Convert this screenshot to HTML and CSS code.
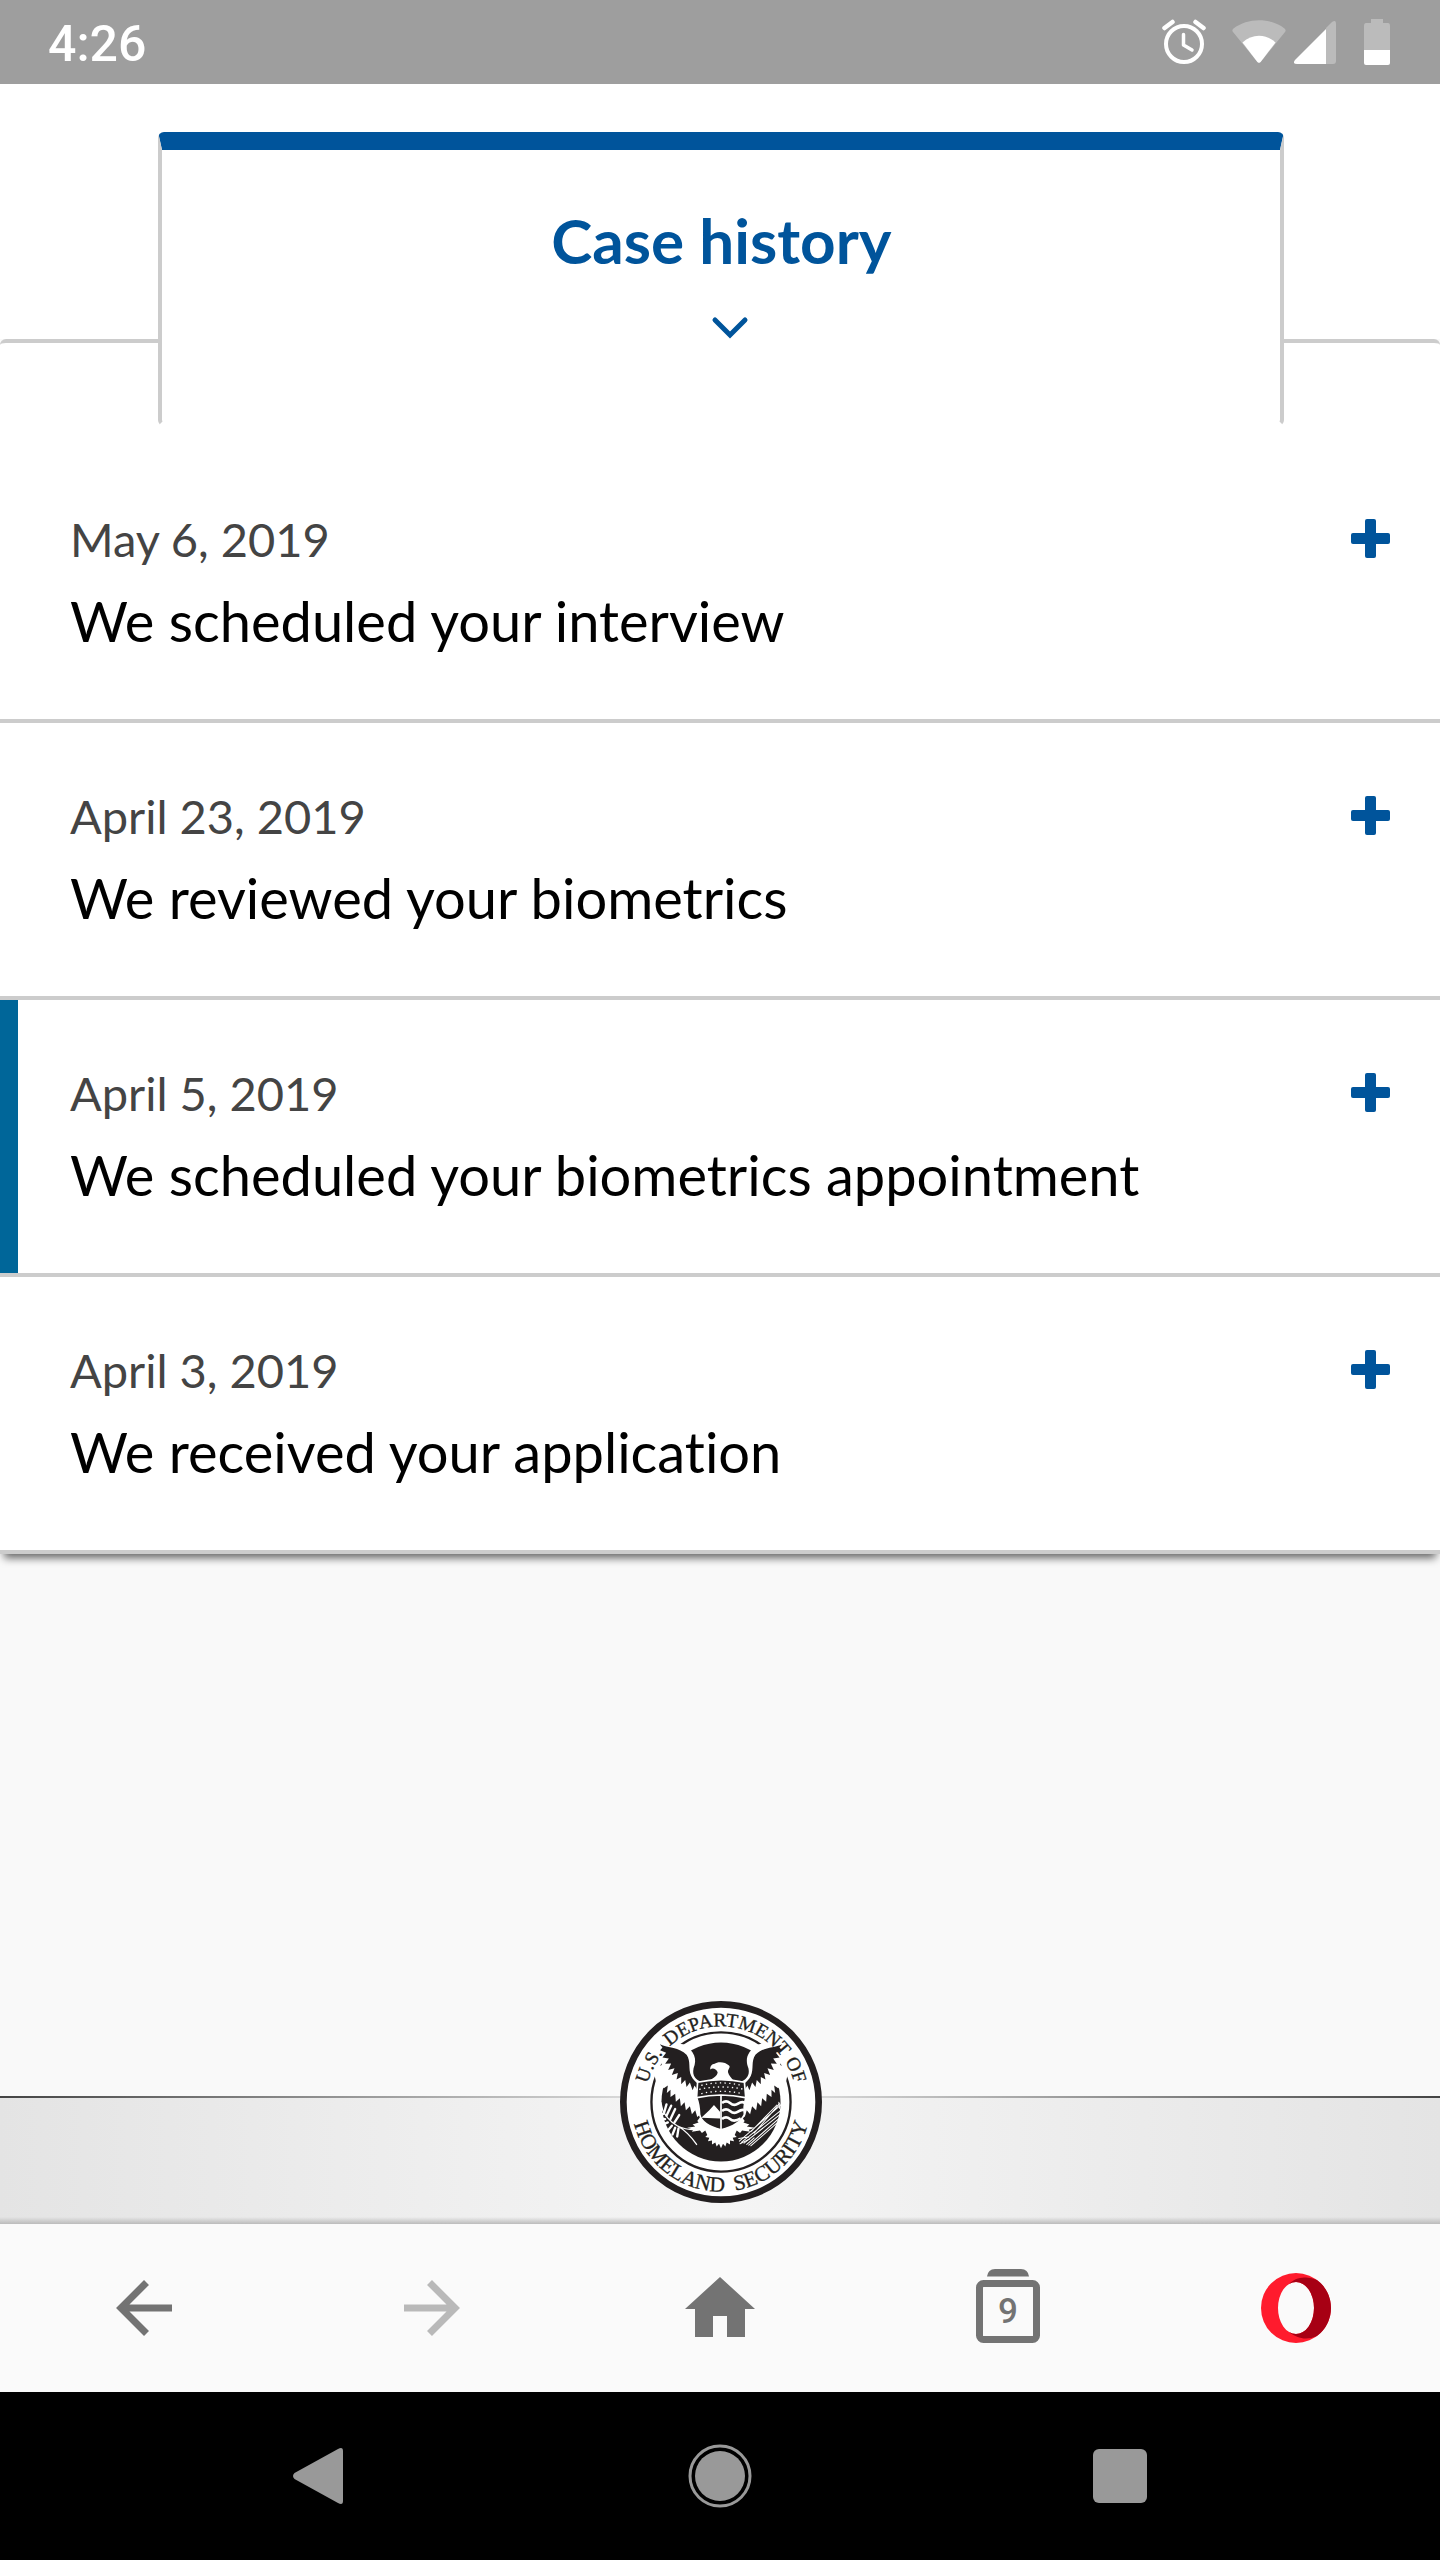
FILE: index.html
```html
<!DOCTYPE html>
<html lang="en">
<head>
  <meta charset="UTF-8" />
  <meta name="viewport" content="width=device-width, initial-scale=1.0" />
  <title>Case history</title>
  <link rel="stylesheet" href="styles.css">
</head>
<body>
  <header class="status-bar">
    <span class="clock">4:26</span>
    <div class="status-icons">
      <svg class="icon-alarm" width="44" height="46" viewBox="0 0 44 46" fill="none" stroke="#fff" stroke-linecap="round" stroke-linejoin="round">
        <circle cx="22" cy="25" r="18" stroke-width="4" />
        <path d="M21.500 15.500V26L30 31" stroke-width="3.500" />
        <path d="M2.500 9L10.500 3M33.500 3L41.500 9" stroke-width="4.500" />
      </svg>
      <svg class="icon-wifi" width="54" height="46" viewBox="0 0 54 46">
        <path d="M1.500 9.500C16 -1.500 38 -1.500 52.500 9.500Q54.500 11 53 13L29 42.500Q27 45 25 42.500L1 13Q-.5 11 1.500 9.500Z" fill="#bbb" />
        <path d="M10.500 23.500C20 14.500 34 14.500 43.500 23.500L29 42.500Q27 45 25 42.500Z" fill="#fff" />
      </svg>
      <svg class="icon-signal" width="42" height="46" viewBox="0 0 42 46">
        <path d="M32 9L38 3Q42 0 42 5V42Q42 45 39 45H32Z" fill="#bbb" />
        <path d="M32 10V45H3Q-2 45 1 41Z" fill="#fff" />
      </svg>
      <svg class="icon-battery" width="26" height="46" viewBox="0 0 26 46">
        <path d="M7 0H19V4H24Q26 4 26 7V31H0V7Q0 4 2 4H7Z" fill="#bbb" />
        <path d="M0 31H26V44Q26 46 24 46H2Q0 46 0 44Z" fill="#fff" />
      </svg>
    </div>
  </header>

  <main>
    <section class="panel">
      <button class="tab" type="button">
        Case history
        <svg class="chevron" width="38" height="24" viewBox="0 0 38 24" fill="none" stroke="#00549b" stroke-width="5" stroke-linecap="round">
          <path d="M4 4L19 19L34 4" />
        </svg>
      </button>

      <ul class="history">
        <li class="event">
          <div>
            <p class="date">May 6, 2019</p>
            <p class="title">We scheduled your interview</p>
          </div>
          <button class="expand" type="button" aria-label="Expand">
            <svg width="39" height="39" viewBox="0 0 39 39" fill="#00549b"><rect x="14" width="11" height="39" rx="2" /><rect y="14" width="39" height="11" rx="2" /></svg>
          </button>
        </li>
        <li class="event">
          <div>
            <p class="date">April 23, 2019</p>
            <p class="title">We reviewed your biometrics</p>
          </div>
          <button class="expand" type="button" aria-label="Expand">
            <svg width="39" height="39" viewBox="0 0 39 39" fill="#00549b"><rect x="14" width="11" height="39" rx="2" /><rect y="14" width="39" height="11" rx="2" /></svg>
          </button>
        </li>
        <li class="event active">
          <div>
            <p class="date">April 5, 2019</p>
            <p class="title">We scheduled your biometrics appointment</p>
          </div>
          <button class="expand" type="button" aria-label="Expand">
            <svg width="39" height="39" viewBox="0 0 39 39" fill="#00549b"><rect x="14" width="11" height="39" rx="2" /><rect y="14" width="39" height="11" rx="2" /></svg>
          </button>
        </li>
        <li class="event">
          <div>
            <p class="date">April 3, 2019</p>
            <p class="title">We received your application</p>
          </div>
          <button class="expand" type="button" aria-label="Expand">
            <svg width="39" height="39" viewBox="0 0 39 39" fill="#00549b"><rect x="14" width="11" height="39" rx="2" /><rect y="14" width="39" height="11" rx="2" /></svg>
          </button>
        </li>
      </ul>
    </section>
  </main>

  <footer class="site-footer">
    <svg class="seal" viewBox="61 61 604 604" role="img" aria-label="U.S. Department of Homeland Security">
      <defs>
        <path id="arcTop" d="M137 363A226 226 0 0 1 589 363" />
        <path id="arcBottom" d="M95 363A268 268 0 0 0 631 363" />
        <g id="wing">
          <path fill="#fff" d="M165 180L250 190C285 210 292 235 281 262C276 285 288 295 302 302V400L292 408L286 388L276 400L270 376L258 388L254 364L243 376L240 352L228 362L226 338L212 348L212 326L201 336L204 314L192 322L168 300L160 262L186 252Z" />
          <path d="M180 190C205 202 238 198 260 222C274 242 264 264 274 285C279 297 288 302 293 308V328L284 314L278 328L270 305L260 318L256 297L244 310L244 288L230 296L234 276L216 282L224 262L205 267L214 248L196 249L207 233L188 230L199 216L181 208L188 200Z" />
        </g>
      </defs>
      <g fill="#231f20">
        <circle cx="363" cy="363" r="292" fill="#fff" stroke="#231f20" stroke-width="20" />
        <circle cx="363" cy="363" r="208" fill="none" stroke="#231f20" stroke-width="7" />
        <circle cx="363" cy="363" r="178" />
        <use href="#wing" />
        <use href="#wing" transform="translate(726 0) scale(-1 1)" />
        <text class="seal-text" font-size="58"><textPath href="#arcTop" startOffset="50%" text-anchor="middle">U.S.&ensp;DEPARTMENT OF</textPath></text>
        <text class="seal-text" font-size="64"><textPath href="#arcBottom" startOffset="50%" text-anchor="middle">HOMELAND&ensp;SECURITY</textPath></text>
      </g>
      <!-- head, legs and tail -->
      <g fill="#fff">
        <path d="M331 266C330 256 336 250 344 249C352 241 376 242 387 254C393 260 383 264 384 274C386 284 394 290 400 299H326C342 292 352 284 353 274C348 264 338 260 331 266Z" />
        <path d="M303 405L292 420L296 424L278 430L286 436L262 440L280 446L276 452L300 448L306 456L316 448L322 462L316 468L328 470L324 480L336 478L336 490L346 484L350 496L357 488L363 501L369 488L376 496L380 484L390 490L390 478L402 480L398 470L410 468L404 462L410 448L420 456L426 448L450 452L446 446L464 440L440 436L448 430L430 424L434 420L423 405Z" />
      </g>
      <!-- shield -->
      <path d="M293 304Q363 288 433 304L437 350Q430 378 433 400Q420 432 363 446Q306 432 299 400Q298 370 290 350Z" fill="#231f20" stroke="#fff" stroke-width="5" />
      <path d="M291 350Q363 334 436 350M363 343V444" fill="none" stroke="#fff" stroke-width="5" />
      <g fill="none" stroke="#fff" stroke-width="4" stroke-dasharray="4 10">
        <path d="M304 313Q363 299 424 313" />
        <path d="M298 325Q363 311 432 325" />
        <path d="M304 338Q363 324 428 338" />
      </g>
      <path d="M304 410L328 388L342 372L360 392V412Z" fill="#fff" />
      <path d="M366 366Q378 356 390 366T414 368T434 366M366 390Q378 380 390 390T414 392T432 388M366 414Q378 404 390 414T422 412" fill="none" stroke="#fff" stroke-width="8" />
      <!-- olive branch -->
      <g stroke="#fff" fill="none" stroke-width="4" stroke-linecap="round">
        <path d="M184 378Q200 416 232 434T290 490M232 434Q256 446 284 446" />
        <path stroke-width="7" d="M186 384L182 366M192 398L200 370M200 404L214 374M212 414L226 384M224 424L238 402M188 400L178 394M196 414L182 412M204 424L190 430M216 434L204 448M226 440L218 460M236 442L232 466" />
      </g>
      <!-- arrows -->
      <g stroke="#fff" fill="none" stroke-width="3" stroke-linecap="round">
        <path d="M418 480L548 366M424 484L554 378M432 486L550 392M446 492L546 404M452 494L542 416M454 450L530 372M462 456L538 368" />
        <path d="M416 472L446 468M420 488L448 474M440 490L462 470M536 364L538 382M552 364L546 388M556 384L544 402M550 402L534 418" />
      </g>
    </svg>
  </footer>

  <nav class="browser-bar">
    <button type="button" aria-label="Back">
      <svg width="56" height="56" viewBox="0 0 56 56" fill="none" stroke="#737373" stroke-width="7"><path d="M56 28H6M30.500 2.500L5 28L30.500 53.500" /></svg>
    </button>
    <button type="button" aria-label="Forward" disabled>
      <svg width="56" height="56" viewBox="0 0 56 56" fill="none" stroke="#b9b9b9" stroke-width="7"><path d="M0 28H50M25.500 2.500L51 28L25.500 53.500" /></svg>
    </button>
    <button type="button" aria-label="Home">
      <svg width="70" height="62" viewBox="0 0 70 62" fill="#737373"><path d="M35 0L70 32H60V60H42V39H28V60H10V32H0Z" /></svg>
    </button>
    <button type="button" aria-label="Open tabs">
      <svg width="64" height="78" viewBox="0 0 64 78" fill="#737373">
        <path d="M11 7.500Q12 0 19 0H45Q52 0 53 7.500Z" />
        <rect x="3.500" y="14.500" width="57" height="56" rx="4" fill="none" stroke="#737373" stroke-width="7" />
        <text class="tab-count" x="32" y="54" text-anchor="middle">9</text>
      </svg>
    </button>
    <button type="button" aria-label="Opera menu">
      <svg width="70" height="70" viewBox="0 0 70 70">
        <path fill="#ff1b2d" fill-rule="evenodd" d="M35 0A35 35 0 1 0 35 70A35 35 0 1 0 35 0ZM35 9A18 26 0 1 1 35 61A18 26 0 1 1 35 9Z" />
        <path fill="#a70014" d="M28 11C34 5 40 4.500 45 4.500Q51 4.500 56 7A35 35 0 0 1 56 63Q50 65.500 45 65.500C39 65.500 33 63 28 59Q31 61 35 61A18 26 0 0 0 35 9Q31 9 28 11Z" />
      </svg>
    </button>
  </nav>

  <nav class="system-bar">
    <button type="button" aria-label="System back">
      <svg width="54" height="58" viewBox="0 0 54 58" fill="#999"><path d="M1.500 26L45 2Q50 -.5 50 4V54Q50 58.500 45 56L1.500 32Q-1.500 29 1.500 26Z" /></svg>
    </button>
    <button type="button" aria-label="System home">
      <svg width="64" height="64" viewBox="0 0 64 64" fill="#999"><circle cx="32" cy="32" r="25" /><circle cx="32" cy="32" r="30" fill="none" stroke="#999" stroke-width="3" /></svg>
    </button>
    <button type="button" aria-label="Recent apps">
      <svg width="54" height="54" viewBox="0 0 54 54" fill="#999"><rect width="54" height="54" rx="6" /></svg>
    </button>
  </nav>
</body>
</html>
```
FILE: styles.css
```css
* {
  margin: 0;
  padding: 0;
  box-sizing: border-box;
}

body {
  display: flex;
  flex-direction: column;
  min-height: 100vh;
  background: #f9f9f9;
  color: #000;
  font-family: Lato, sans-serif;
  font-variant-ligatures: none;
}

button {
  border: 0;
  background: none;
  font: inherit;
  color: inherit;
}

svg {
  display: block;
}

/* status bar */
.status-bar {
  display: flex;
  justify-content: space-between;
  align-items: center;
  height: 84px;
  padding: 0 50px 0 48px;
  background: #9e9e9e;
  color: #fff;
}

.clock {
  padding-top: 4px;
  font-family: Roboto, sans-serif;
  font-size: 50px;
  font-weight: 500;
  line-height: 56px;
}

.status-icons {
  display: flex;
}

.icon-wifi {
  margin-left: 26px;
}

.icon-signal {
  margin-left: 8px;
}

.icon-battery {
  margin-left: 28px;
}

/* case history */
main {
  flex: 1;
}

main::before {
  content: "";
  display: block;
  height: 255px;
  background: #fff;
}

.panel {
  border: 4px solid #ccc;
  border-width: 4px 0;
  border-radius: 6px 6px 0 0;
  background: #fff;
  box-shadow: 0 8px 8px -4px rgba(0, 0, 0, 0.6);
}

.tab {
  display: flex;
  flex-direction: column;
  align-items: center;
  gap: 40px;
  width: 78.2%;
  height: 294px;
  margin: -211px 0 20px 11%;
  padding-top: 54px;
  border: 4px solid #ccc;
  border-top: 18px solid #00549b;
  border-bottom-color: transparent;
  border-radius: 6px;
  background: #fff;
  color: #00549b;
  font-size: 62px;
  font-weight: 700;
  line-height: 72px;
}

.chevron {
  margin-left: 18px;
}

.history {
  list-style: none;
}

.event {
  display: flex;
  justify-content: space-between;
  align-items: flex-start;
  padding: 61px 50px 58px 70px;
  border-bottom: 4px solid #ccc;
}

.event:last-child {
  border-bottom: 0;
}

.event.active {
  box-shadow: inset 18px 0 #006699;
}

.date {
  margin-bottom: 10px;
  color: #444;
  font-size: 47px;
  line-height: 64px;
}

.title {
  font-size: 56px;
  line-height: 80px;
}

.expand {
  padding: 12px 0;
}

/* footer */
.site-footer {
  position: relative;
  height: 128px;
  background:
    linear-gradient(to top, #bbb, transparent 7px),
    linear-gradient(to right, #e4e4e4, #f5f5f5 50%, #e4e4e4);
}

.site-footer::before {
  content: "";
  display: block;
  height: 2px;
  background: linear-gradient(to right, #444, #eee 50%, #444);
}

.seal {
  position: absolute;
  top: -95px;
  left: 50%;
  width: 202px;
  margin-left: -100px;
}

.seal-text {
  font-family: "Liberation Serif", serif;
  stroke: #231f20;
  stroke-width: 1;
}

/* bottom bars */
.browser-bar,
.system-bar {
  display: flex;
  height: 168px;
}

.browser-bar {
  background: #fafafa;
}

.system-bar {
  padding: 0 120px;
  background: #000;
}

.browser-bar button,
.system-bar button {
  display: flex;
  flex: 1;
  justify-content: center;
  align-items: center;
}

.tab-count {
  font-family: Roboto, sans-serif;
  font-size: 35px;
  font-weight: 500;
}
```
